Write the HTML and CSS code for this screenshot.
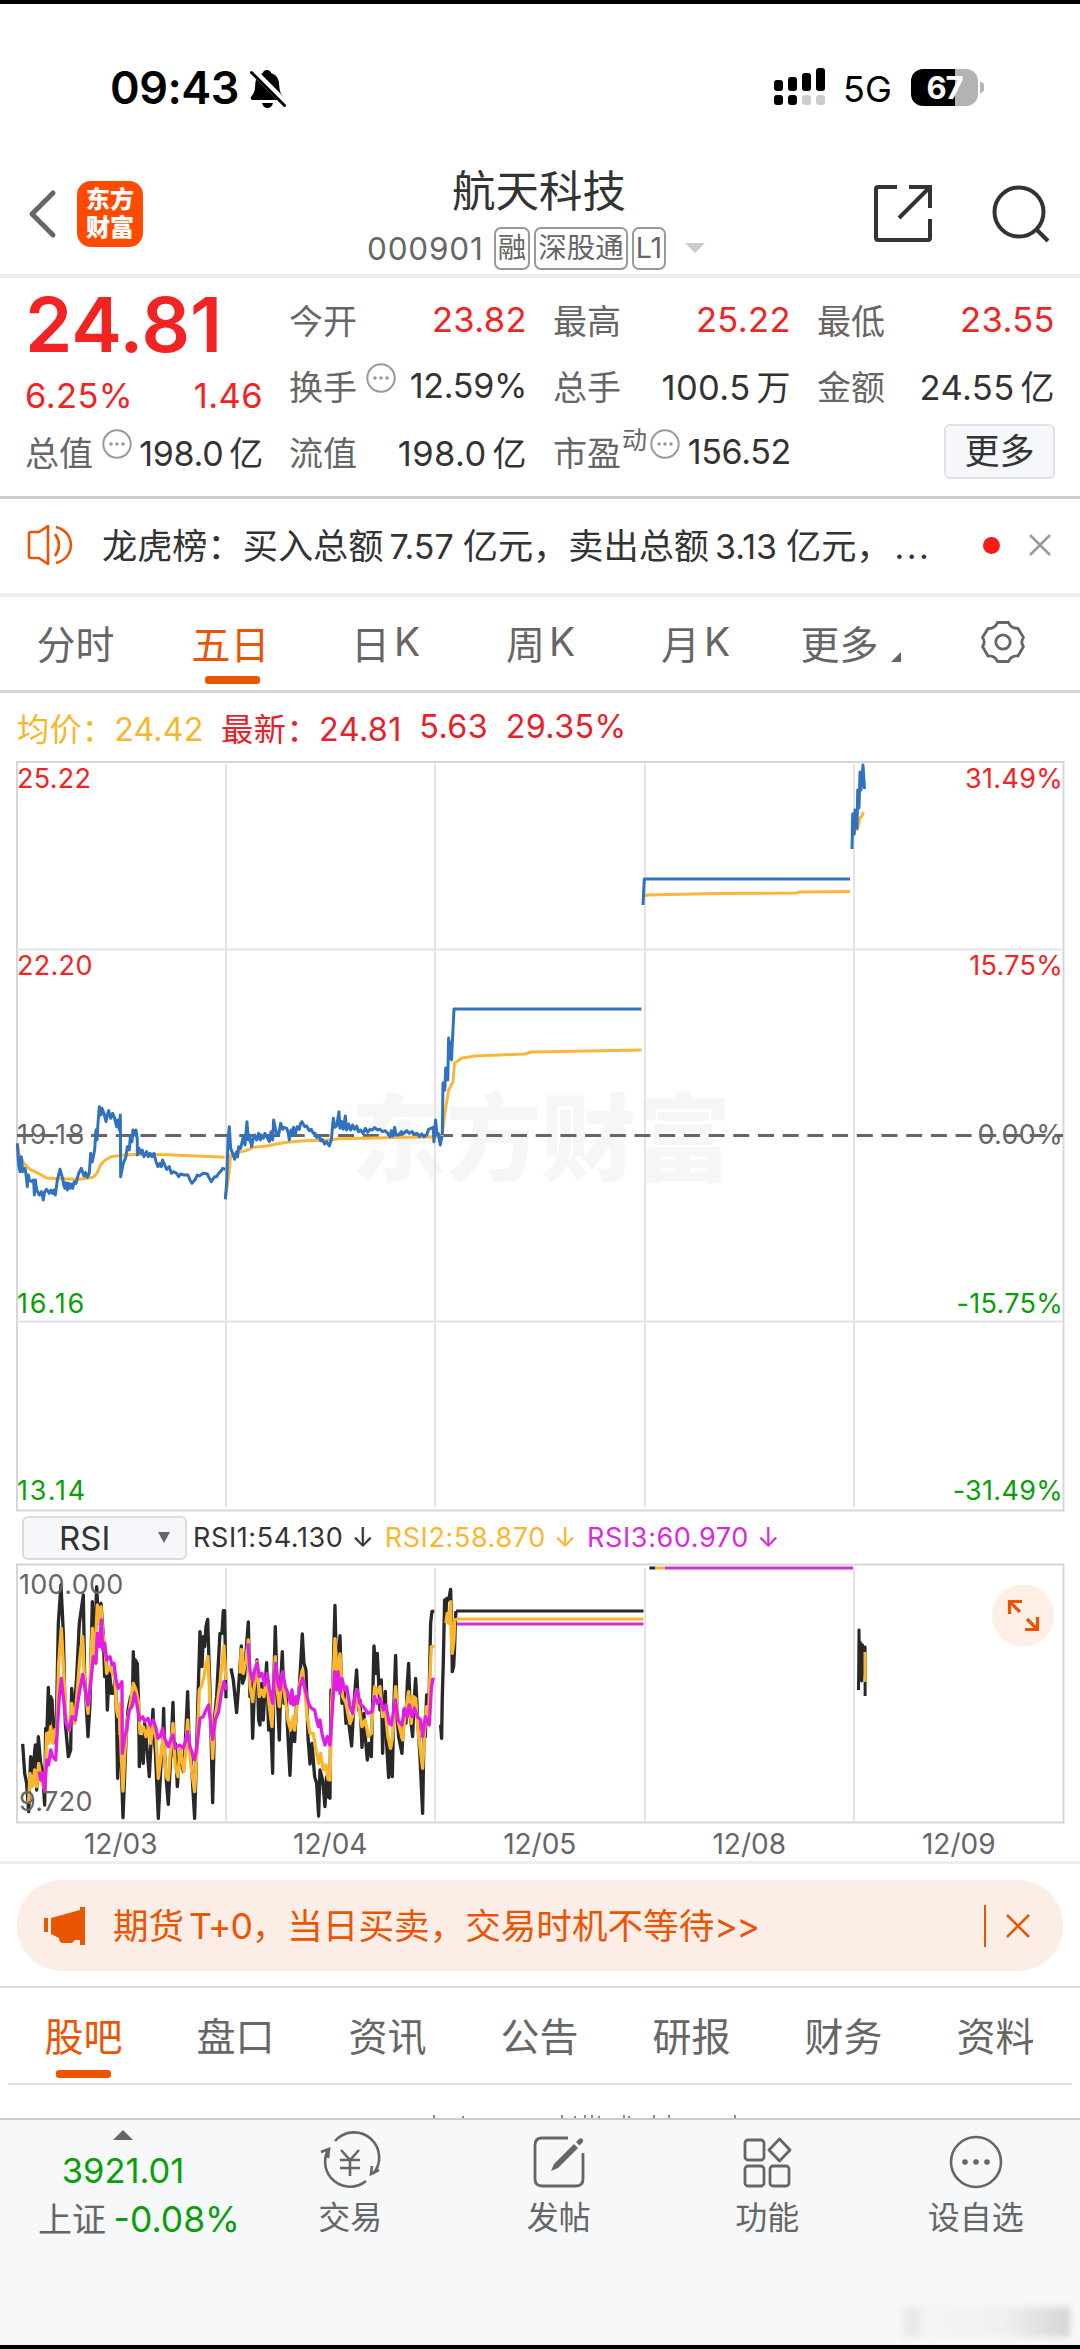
FILE: index.html
```
<!DOCTYPE html>
<html lang="zh-CN">
  <head>
    <meta charset="UTF-8">
    <title>航天科技 000901</title>
    <link rel="stylesheet" href="styles.css">
  </head>
  <body>
    <div class="status">
      <span class="time">09:43</span>
      <svg class="bell" width="36" height="38" viewBox="0 0 36 38">
        <path d="M17 0c2.400 0 4 1.500 4.300 3.200C27 5 29 9.500 29.200 15c.3 6 1.300 8 3.800 11 1.800 2.300 1.200 4-1 4H3c-2.400 0-3-2-1.300-4C4.500 22.500 5 20 5.200 15c.2-5.500 2-10 7.500-11.800C13 1.500 14.600 0 17 0zM12 33h11c-.5 3-3 5-5.500 5S12.500 36 12 33z"/>
        <path d="M1-1l36 36" stroke="#fff" stroke-width="7"/>
        <path d="M1.500 2.500l33 33" stroke="#000" stroke-width="3" stroke-linecap="round"/>
      </svg>
      <svg class="signal" width="54" height="38" viewBox="0 0 54 38">
        <g fill="#000"><rect x="1" y="12" width="9" height="11" rx="3"/><rect x="15" y="9" width="9" height="14" rx="3"/><rect x="29" y="5" width="9" height="18" rx="3"/><rect x="43" y="0" width="9" height="23" rx="3"/><rect x="1" y="27" width="9" height="10" rx="3"/><rect x="15" y="27" width="9" height="10" rx="3"/></g>
        <g fill="#ccc"><rect x="29" y="27" width="9" height="10" rx="3"/><rect x="43" y="27" width="9" height="10" rx="3"/></g>
      </svg>
      <span class="net">5G</span>
      <span class="battery">67</span><i class="cap"></i>
    </div>

    <div class="header">
      <svg class="back" width="28" height="48" viewBox="0 0 28 48"><path d="M25 3L4 24l21 21" fill="none" stroke="#666" stroke-width="5" stroke-linecap="round" stroke-linejoin="round"/></svg>
      <div class="logo">东方<br>财富</div>
      <div class="title">
        <h1>航天科技</h1>
        <div class="code">000901 <i>融</i><i>深股通</i><i>L1</i><b></b></div>
      </div>
      <svg class="share" width="60" height="60" viewBox="0 0 60 60"><path d="M24 3H5q-2 0-2 2v49q0 2 2 2h50q2 0 2-2V35M36 3h21v21M57 3L26 34" fill="none" stroke="#333" stroke-width="4"/></svg>
      <svg class="search" width="58" height="60" viewBox="0 0 58 60"><circle cx="27" cy="28" r="24.500" fill="none" stroke="#333" stroke-width="4"/><path d="M44 45l12 12" stroke="#333" stroke-width="4"/></svg>
    </div>

    <div class="quote">
      <div class="col">
        <div class="price">24.81</div>
        <div class="row red chg"><span>6.25%</span><span>1.46</span></div>
        <div class="row"><label>总值<svg class="dots"><use href="#more"/></svg></label><span class="tight">198.0<em>亿</em></span></div>
      </div>
      <div class="col">
        <div class="row"><label>今开</label><span class="red">23.82</span></div>
        <div class="row"><label>换手<svg class="dots"><use href="#more"/></svg></label><span class="tight">12.59%</span></div>
        <div class="row"><label>流值</label><span>198.0<em>亿</em></span></div>
      </div>
      <div class="col">
        <div class="row"><label>最高</label><span class="red">25.22</span></div>
        <div class="row"><label>总手</label><span>100.5<em>万</em></span></div>
        <div class="row"><label>市盈<sup>动</sup><svg class="dots"><use href="#more"/></svg></label><span class="tight">156.52</span></div>
      </div>
      <div class="col">
        <div class="row"><label>最低</label><span class="red">23.55</span></div>
        <div class="row"><label>金额</label><span>24.55<em>亿</em></span></div>
        <div class="row end"><button class="more">更多</button></div>
      </div>
    </div>

    <div class="notice">
      <svg width="48" height="40" viewBox="0 0 48 40"><path d="M2 9q0-2 2-2h8L21 1v38l-9-6H4q-2 0-2-2zM28 9q8 11 0 22M29 2q14 4 15 18-1 14-15 18" fill="none" stroke="#ea5504" stroke-width="2.600" stroke-linejoin="round"/></svg>
      <p>龙虎榜：买入总额<span>7.57</span>亿元，卖出总额<span>3.13</span>亿元，<span class="dot3">...</span></p>
      <i></i>
      <svg width="24" height="24" viewBox="0 0 24 24"><path d="M2 2l20 20M22 2L2 22" stroke="#999" stroke-width="2.500"/></svg>
    </div>

    <div class="tabs">
      <a>分时</a>
      <a class="on">五日</a>
      <a>日<s>K</s></a>
      <a>周<s>K</s></a>
      <a>月<s>K</s></a>
      <a>更多<svg width="10" height="10" class="tri"><path d="M10 0v10H0z" fill="#666"/></svg></a>
      <a><svg width="46" height="44" viewBox="0 0 46 44"><path d="M17.500 2.500h11q2 5 6.500 5.500l3 .5 5.500 9q-3.500 4.500 0 9l-5.500 9.500q-7-.5-9.500 5.500h-11Q15 35.500 8 36L2.500 26.500q3.500-4.500 0-9L8 8.500q7 .5 9.500-6z" fill="none" stroke="#666" stroke-width="2.800" stroke-linejoin="round"/><circle cx="23" cy="22" r="7.200" fill="none" stroke="#666" stroke-width="2.800"/></svg></a>
    </div>

    <div class="legend"><span class="avg">均价：24.42</span><span>最新：24.81</span><span>5.63</span><span>29.35%</span></div>

    <!-- 五日走势 -->
    <svg class="chart" width="1080" height="752" viewBox="0 760 1080 752">
      <text class="mark" x="351" y="1174">东方财富</text>
      <path class="frame" d="M17 762h1046.500v748.500H17z"/>
      <path class="grid" d="M17 949.500h1046M17 1321.500h1046M226 764v743M435 764v743M645 764v743M854 764v743"/>
      <path class="zero" d="M17 1135.500h1046"/>
      <g transform="translate(0 1040) scale(.3333)">
        <polyline class="line avg3" points="52,310 58,345 72,370 90,388 115,400 140,414 180,416 240,418 280,412 292,398 302,374 316,360 334,350 370,345 430,343 500,344 590,348 674,352"/>
        <polyline class="line avg3" points="677,470 686,410 692,345 715,337 738,332 760,322 800,318 850,308 900,303 980,300 1020,296 1120,294 1220,292 1328,290"/>
        <polyline class="line now3" points="52,310 56,375 60,395 64,350 68,395 75,385 79,410 82,440 85,405 88,420 95,425 101,420 103,465 106,420 110,450 118,465 124,455 130,480 134,455 140,448 148,460 153,450 158,460 162,450 166,465 172,420 176,405 180,388 188,415 191,435 195,445 198,428 202,450 206,430 210,445 214,432 218,445 223,425 228,430 236,400 244,385 252,408 257,398 262,412 268,400 272,340 277,365 284,330 288,270 291,300 294,250 298,200 303,225 306,205 312,220 318,245 322,225 326,212 332,235 338,220 344,235 350,260 354,240 358,270 361,225 362,410 370,370 378,350 382,320 388,330 391,290 396,305 399,270 404,285 408,270 412,300 412,345 417,325 422,340 427,330 432,350 440,335 445,350 450,340 456,350 462,340 468,365 474,380 480,370 484,380 488,360 494,375 500,388 508,380 514,400 520,395 530,400 536,410 542,402 552,405 564,405 570,420 576,430 586,418 592,405 598,408 610,400 622,402 628,415 634,425 644,410 650,410 656,400 664,392 668,385 676,388"/>
        <polyline class="line now3" points="676,478 680,430 684,300 688,260 692,325 698,340 704,358 710,335 713,350 716,320 722,325 730,290 735,315 741,245 745,300 748,285 755,320 760,295 764,285 770,300 776,280 781,300 784,285 790,295 795,280 800,290 808,305 813,275 818,300 821,240 826,265 830,280 836,285 842,250 848,268 852,262 860,265 865,280 868,300 873,270 876,285 881,262 886,282 892,260 898,268 902,250 906,245 914,260 920,258 928,272 934,268 940,280 945,280 950,292 957,288 962,302 967,298 974,312 980,305 988,318 994,300 1000,235 1004,262 1010,258 1017,215 1020,265 1026,245 1030,268 1036,228 1040,270 1046,252 1052,270 1058,255 1063,268 1070,258 1075,275 1082,270 1089,280 1096,265 1103,277 1110,268 1117,270 1124,263 1132,270 1140,268 1148,275 1156,272 1163,280 1170,290 1174,272 1179,288 1184,262 1188,285 1196,285 1204,275 1212,280 1220,272 1228,280 1236,275 1244,283 1251,280 1258,290 1265,282 1272,290 1280,285 1286,268 1300,262 1302,305 1307,240 1311,285 1315,280 1321,315 1327,285"/>
      </g>
      <polyline class="line avg" points="442,1136 445,1113 448.600,1090 453,1082 454.500,1063 462,1058 475,1056 500,1055 525,1054 531,1052 560,1051.500 641.500,1050"/>
      <polyline class="line avg" points="644,896 647,895 715,893.500 797,893 799,892 850,891.500"/>
      <polyline class="line avg" points="857,831 860,818 862,816 863.500,812"/>
      <polyline class="line now" points="442.300,1135 443,1083 444.800,1090 445.700,1068 447.800,1080 448.600,1038 449.500,1058 450.500,1042 451.500,1060 454,1009 641.500,1009"/>
      <polyline class="line now" points="643,905 644.300,879 850,879"/>
      <polyline class="line now" points="852,849 852.700,814 854.300,834 855,810 857,828 857.700,790 859,808 860,772 861,790 863,765 864.500,789"/>
      <g class="axis">
        <text class="up" x="17" y="788">25.22</text>
        <text class="up" x="17" y="975">22.20</text>
        <text class="wide" x="17" y="1144">19.18</text>
        <text class="down wide" x="17" y="1313">16.16</text>
        <text class="down wide" x="17" y="1500">13.14</text>
      </g>
      <g class="axis right">
        <text class="up" x="1063" y="788">31.49%</text>
        <text class="up" x="1063" y="975">15.75%</text>
        <text x="1063" y="1144">0.00%</text>
        <text class="down" x="1063" y="1313">-15.75%</text>
        <text class="down" x="1063" y="1500">-31.49%</text>
      </g>
    </svg>

    <div class="rsi">
      <button>RSI<i></i></button>
      <span>RSI1:54.130 ↓</span><span class="r2">RSI2:58.870 ↓</span><span class="r3">RSI3:60.970 ↓</span>
    </div>

    <!-- RSI 指标 -->
    <svg class="chart" width="1080" height="262" viewBox="0 1563 1080 262">
      <path class="frame" d="M17 1564.500h1046.500v258H17z"/>
      <path class="grid" d="M226 1568v253M435 1568v253M645 1568v253M854 1568v253"/>
      <g transform="translate(0 1490) scale(.3333)">
        <polyline class="line k3" points="68,762 74,850 80,880 86,965 92,800 98,850 106,765 110,900 115,740 122,820 128,850 134,945 137,715 141,720 145,592 148,720 152,620 156,630 162,740 168,760 175,400 183,285 190,430 196,700 205,800 212,780 215,595 222,680 230,560 238,400 250,315 254,560 264,740 270,640 277,335 281,480 284,460 290,290 296,400 303,340 310,440 314,560 318,500 322,660 328,540 334,610 340,610 346,560 350,700 353,865 357,740 362,760 369,983 378,750 384,660 392,620 397,640 400,485 404,600 406,510 412,520 416,650 418,830 424,740 430,820 434,700 438,740 448,860 454,740 459,658 462,740 466,780 475,985 484,800 488,760 491,655 494,790 498,860 505,943 512,800 519,637 523,800 526,760 532,890 540,780 550,845 556,760 563,605 568,780 573,800 584,985 592,700 596,560 600,425 606,530 610,440 614,470 618,410 623,388 630,600 638,938 644,680 650,620 655,520 660,430 666,430 670,362 674,362 678,625"/>
        <polyline class="line k3" points="693,535 700,570 710,668 718,560 724,468 728,580 734,560 738,490 745,396 750,620 754,570 758,745 764,580 771,510 776,690 780,705 785,580 790,690 795,600 800,518 806,720 812,680 818,850 822,560 826,410 832,620 838,750 843,560 847,485 852,640 858,600 862,700 870,856 876,700 884,755 890,640 896,620 900,560 907,432 912,520 918,540 924,740 930,822 936,760 944,860 950,880 956,978 960,840 968,870 975,950 980,860 984,920 990,925 993,600 997,640 1005,346 1010,560 1015,520 1020,437 1026,640 1032,600 1038,700 1044,680 1055,768 1062,640 1070,540 1076,660 1080,630 1086,772 1092,670 1096,740 1102,810 1108,760 1114,800 1118,640 1122,468 1128,550 1132,490 1140,660 1144,570 1148,790 1152,660 1156,604 1160,760 1166,862 1172,760 1177,860 1182,640 1187,496 1192,690 1196,740 1206,790 1212,660 1218,700 1222,580 1226,520 1231,680 1238,740 1242,640 1247,565 1254,700 1260,800 1268,970 1272,740 1276,740 1280,615 1284,700 1288,600 1292,400 1296,364 1303,364"/>
        <polyline class="line k3" points="1322,705 1325,745 1327,620 1330,520 1334,330 1338,370 1340,325 1346,330 1352,298 1356,440 1357,545 1361,530 1364,470 1366,400 1368,363"/>
        <polyline class="line o3" points="86,940 90,850 97,890 104,840 110,890 116,820 124,870 134,900 140,730 146,760 152,710 158,760 164,720 170,740 176,520 184,415 192,560 198,690 208,720 215,640 224,700 232,600 240,500 248,440 254,580 264,670 270,580 277,415 282,500 286,470 292,345 298,400 303,350 308,430 314,460 320,550 328,530 338,550 344,560 350,660 354,680 358,640 364,800 369,903 375,780 382,690 390,650 400,580 408,600 416,640 420,730 430,710 438,740 446,710 452,760 460,700 468,740 475,865 484,790 490,730 498,860 505,870 510,800 519,700 526,830 534,860 540,780 552,845 558,770 563,690 568,780 576,850 584,905 592,760 598,600 604,590 612,560 618,520 624,500 630,640 638,805 646,680 652,640 660,580 668,500 672,468 678,570"/>
        <polyline class="line o3" points="720,550 724,478 730,550 738,510 745,450 750,590 758,635 764,580 771,515 778,620 785,600 792,620 800,560 808,650 816,710 822,580 826,500 832,600 838,650 847,550 855,620 864,690 872,720 880,680 884,720 892,640 900,580 907,540 916,620 922,680 930,730 940,730 948,780 956,820 962,790 970,840 978,825 984,868 990,870 995,640 1000,560 1005,446 1012,560 1020,492 1028,620 1038,640 1050,700 1058,680 1070,600 1078,660 1086,710 1096,690 1105,740 1114,730 1124,590 1132,610 1140,590 1148,680 1156,660 1164,740 1172,775 1178,740 1187,590 1196,700 1208,750 1216,670 1226,605 1234,700 1240,620 1247,625 1256,740 1268,835 1274,720 1280,650 1286,680 1290,560 1294,470 1304,470"/>
        <polyline class="line o3" points="1338,400 1342,370 1346,400 1352,335 1354,440 1357,490 1362,450 1364,390 1372,388"/>
        <polyline class="line m3" points="117,845 122,870 128,850 134,905 140,810 146,825 152,780 158,800 167,810 172,720 178,620 184,565 190,620 198,700 206,720 216,680 226,690 236,620 248,553 256,600 264,645 272,580 280,500 288,520 292,430 298,470 304,390 308,480 314,460 320,510 330,500 336,525 342,520 348,570 355,595 366,575 367,790 374,740 380,720 388,660 396,650 404,610 412,650 418,690 428,680 434,695 444,685 450,705 460,690 468,715 474,745 480,740 488,715 494,745 505,770 512,750 519,735 526,775 538,765 550,775 556,755 563,725 570,770 584,810 592,760 600,685 610,680 618,660 626,645 632,700 638,748 646,690 656,665 664,610 672,575 680,600"/>
        <polyline class="line m3" points="744,460 750,540 758,575 764,540 772,520 778,560 786,550 794,585 802,550 808,595 818,640 822,570 827,520 834,580 840,600 848,545 856,590 864,610 872,640 876,600 880,645 888,620 892,640 900,590 908,565 916,600 926,640 934,655 944,660 950,690 956,710 960,690 966,730 975,765 982,740 990,765 996,680 1004,545 1010,600 1014,545 1020,610 1026,565 1034,600 1040,590 1050,650 1058,670 1066,610 1072,600 1080,640 1090,650 1104,670 1116,665 1124,620 1132,640 1140,625 1150,660 1158,645 1168,700 1174,705 1186,630 1194,690 1206,705 1214,655 1222,680 1228,645 1236,680 1244,655 1252,680 1262,690 1268,740 1276,680 1288,705 1294,600 1298,568 1304,568"/>
      </g>
      <path class="line k" d="M456 1611h187.500M649.400 1568h6M858.500 1690l.5-60 .8 45 1-32 .8 38 1-36 1 30 1.500-28v49"/>
      <path class="line o" d="M456.500 1619h187M655.400 1568h10M865 1652v30"/>
      <path class="line m" d="M457 1624h186.500M665 1568h188"/>
      <g class="axis">
        <text x="19" y="1594">100.000</text>
        <text x="19" y="1811">9.720</text>
      </g>
      <circle cx="1023" cy="1615.500" r="31" fill="#fdeee6"/>
      <path d="M1009.500 1614v-12.500h12.500M1010 1602l10 10M1037.500 1617v12.500h-12.500M1037 1629l-10-10" fill="none" stroke="#ea5504" stroke-width="3.200"/>
    </svg>
    <div class="dates"><span>12/03</span><span>12/04</span><span>12/05</span><span>12/08</span><span>12/09</span></div>

    <div class="ad">
      <svg width="42" height="38" viewBox="0 0 42 38"><path d="M0 11h4v14H0zM7 11L36 3V0h5v38h-5v-5h-5l-3 3h-9q-4 0-4-5l-8-4z" fill="#ea5504"/></svg>
      <p>期货<span> T+0</span>，当日买卖，交易时机不等待<span>&gt;&gt;</span></p>
      <i></i>
      <svg width="24" height="24" viewBox="0 0 24 24"><path d="M1 1l22 22M23 1L1 23" stroke="#ea5504" stroke-width="2.500"/></svg>
    </div>

    <div class="tabs sub">
      <a class="on">股吧</a><a>盘口</a><a>资讯</a><a>公告</a><a>研报</a><a>财务</a><a>资料</a>
    </div>
    <div class="feed">
      <svg width="1080" height="3"><path d="M434 0v3M463 1v2M562 0v3M575 1v2M585 0v3M592 0v3M599 1v2M624 0v3M629 1v2M654 0v3M669 0v3M735 0v3" stroke="#888" stroke-width="2"/></svg>
    </div>

    <div class="footer">
      <div class="index">
        <i></i>
        <b>3921.01</b>
        <p>上证 <b>-0.08%</b></p>
      </div>
      <a>
        <svg width="62" height="56" viewBox="0 0 62 56"><g fill="none" stroke="#666" stroke-width="2.600"><path d="M16 7A25 25 0 0 1 54 40M47 47A25 25 0 0 1 9 16M2 18l8-3-1 9M60 36l-8 4 1-8"/><path d="M22 16l9 10 9-10M31 26v16M21 26h20M21 34h20"/></g></svg>
        交易
      </a>
      <a>
        <svg width="56" height="56" viewBox="0 0 56 56"><path d="M37 4H11q-7 0-7 7v34q0 7 7 7h34q7 0 7-7V19" fill="none" stroke="#666" stroke-width="2.800"/><path d="M43 10l4 4-20 20-7 3 3-7zM45 8l3-3q2-1.500 3.500 0t0 3.500l-3 3z" fill="#666"/></svg>
        发帖
      </a>
      <a>
        <svg width="52" height="56" viewBox="0 0 52 56"><g fill="none" stroke="#666" stroke-width="2.800"><rect x="4" y="6" width="19" height="20" rx="3"/><rect x="4" y="32" width="19" height="20" rx="3"/><rect x="29" y="32" width="19" height="20" rx="3"/><path d="M38.500 5L49 16 38.500 27 28 16z" stroke-linejoin="round"/></g></svg>
        功能
      </a>
      <a>
        <svg width="56" height="56" viewBox="0 0 56 56"><circle cx="28" cy="28" r="25" fill="none" stroke="#666" stroke-width="2.600"/><g fill="#666"><circle cx="17" cy="28" r="2.800"/><circle cx="28" cy="28" r="2.800"/><circle cx="39" cy="28" r="2.800"/></g></svg>
        设自选
      </a>
      <div class="smudge"></div>
    </div>

    <svg width="0" height="0" class="defs">
      <symbol id="more" viewBox="0 0 30 30"><circle cx="15" cy="15" r="13.700" fill="none" stroke="#999" stroke-width="2"/><g fill="#999"><circle cx="9" cy="15" r="1.800"/><circle cx="15" cy="15" r="1.800"/><circle cx="21" cy="15" r="1.800"/></g></symbol>
    </svg>
  </body>
</html>
```
FILE: styles.css
```
* {
  box-sizing: border-box;
}
body {
  margin: 0;
  width: 1080px;
  height: 2349px;
  overflow: hidden;
  border-top: 4px solid #000;
  border-bottom: 4px solid #000;
  background: #fff;
  color: #333;
  font-family: Inter, "Noto Sans CJK SC", sans-serif;
  display: flex;
  flex-direction: column;
}
body > * {
  flex-shrink: 0;
}
svg {
  display: block;
  overflow: visible;
}
p, h1 {
  margin: 0;
  font-weight: normal;
}
i, em, s {
  font-style: normal;
  text-decoration: none;
}
.defs {
  position: absolute;
}
.red {
  color: #f22323;
}
.status {
  height: 136px;
  padding: 30px 96px 0 110px;
  display: flex;
  align-items: center;
  color: #000;
}
.time {
  font-size: 45px;
  font-weight: 600;
  letter-spacing: -0.5px;
  width: 140px;
}
.bell {
  margin-top: 4px;
}
.signal {
  margin-left: auto;
}
.net {
  font-size: 36px;
  margin: 4px 17px 0 16px;
  width: 51px;
}
.battery {
  width: 67px;
  height: 37px;
  border-radius: 12px;
  background: linear-gradient(90deg, #000 66%, #b3b3b3 66%);
  color: #fff;
  font-size: 31px;
  font-weight: 700;
  line-height: 37px;
  text-align: center;
  letter-spacing: -1px;
}
.cap {
  width: 4px;
  height: 11px;
  margin-left: 2px;
  border-radius: 0 5px 5px 0;
  background: #b3b3b3;
}
.header {
  height: 138px;
  padding: 2px 30px 0 28px;
  border-bottom: 4px solid #eee;
  display: flex;
  align-items: center;
}
.back {
  margin-top: 11px;
}
.logo {
  width: 66px;
  height: 66px;
  margin: 11px 0 0 21px;
  padding-top: 5px;
  border-radius: 14px;
  background: #ff4a00;
  color: #fff;
  font-size: 24px;
  font-weight: 900;
  line-height: 28px;
  text-align: center;
}
.title {
  flex: 1;
  padding: 15px 0 0 224px;
}
.title h1 {
  font-size: 43.5px;
  line-height: 60px;
  padding-left: 85px;
  height: 65px;
}
.code {
  display: flex;
  align-items: center;
  height: 44px;
  font-size: 31.5px;
  letter-spacing: 0.8px;
  color: #666;
  white-space: nowrap;
}
.code i {
  height: 43px;
  padding: 0 2px;
  margin-left: 4px;
  border: 2px solid #999;
  border-radius: 7px;
  font-size: 28.5px;
  line-height: 38px;
  letter-spacing: 0;
}
.code i:first-of-type {
  margin-left: 10px;
}
.code b {
  margin: 0 0 0 19px;
  border: 10px solid transparent;
  border-top-color: #ccc;
  border-bottom: 0;
}
.share {
  margin: 11px 59px 0 0;
}
.search {
  margin: 11px 0 0 0;
}
.quote {
  height: 221px;
  padding: 8px 25px 0;
  border-bottom: 3px solid #ccc;
  display: flex;
  gap: 26px;
}
.col {
  width: 238px;
}
.row {
  height: 66px;
  display: flex;
  align-items: center;
  justify-content: space-between;
  font-size: 34.5px;
  letter-spacing: 0.4px;
  white-space: nowrap;
}
.row .tight {
  font-size: 34px;
  letter-spacing: -0.3px;
}
.row label {
  color: #666;
  font-size: 34px;
  letter-spacing: 0;
  display: flex;
  align-items: center;
}
.row em {
  margin-left: 6px;
  font-size: 34px;
}
.row sup {
  font-size: 25px;
  line-height: 25px;
  margin: -22px 0 0 1px;
}
.row.end {
  justify-content: flex-end;
}
.chg {
  padding-top: 20px;
}
.dots {
  width: 30px;
  height: 30px;
  margin: -14px 0 0 9px;
}
sup + .dots {
  margin-left: 3px;
}
.price {
  height: 66px;
  line-height: 77px;
  font-size: 76px;
  font-weight: 600;
  color: #f22323;
}
.more {
  width: 111px;
  height: 55px;
  padding: 0;
  border: 2px solid #dfe1e6;
  border-radius: 6px;
  background: #f6f7fa;
  color: #333;
  font: 35px/48px Inter, "Noto Sans CJK SC", sans-serif;
}
.notice {
  height: 98px;
  padding: 0 28px 2px 27px;
  border-bottom: 4px solid #eee;
  display: flex;
  align-items: center;
}
.notice p {
  flex: 1;
  padding: 0 0 4px 27px;
  font-size: 35.2px;
  white-space: nowrap;
}
.notice p span {
  margin: 0 9px 0 6px;
  font-size: 34px;
}
.notice p .dot3 {
  margin: 0 0 0 3px;
  letter-spacing: 2.5px;
}
.notice i {
  width: 17px;
  height: 17px;
  border-radius: 50%;
  background: #ff1a1a;
  margin-right: 28px;
}
.tabs {
  height: 96px;
  border-bottom: 3px solid #d5d6d8;
  display: grid;
  grid-template-columns: repeat(6, 155px) 1fr;
  font-size: 39px;
  color: #666;
}
.tabs a {
  position: relative;
  display: flex;
  align-items: center;
  justify-content: center;
  padding: 0 4px 4px 0;
}
.tabs s {
  margin-left: 4px;
}
.tabs .on {
  color: #ea5504;
}
.tabs .on::after {
  content: "";
  position: absolute;
  left: 50%;
  bottom: 6px;
  width: 55px;
  height: 8px;
  margin-left: -28px;
  border-radius: 3px;
  background: #ea5504;
}
.tri {
  margin: 30px 0 0 12px;
}
.legend {
  height: 67px;
  padding-left: 17px;
  display: flex;
  align-items: center;
  gap: 17.5px;
  font-size: 32.3px;
  letter-spacing: 0.4px;
  color: #e62129;
}
.legend .avg {
  color: #f8b62d;
  letter-spacing: 0.1px;
}
.frame {
  fill: none;
  stroke: #d5d6da;
  stroke-width: 2;
}
.grid {
  fill: none;
  stroke: #e3e4ea;
  stroke-width: 2;
}
.zero {
  stroke: #666;
  stroke-width: 3;
  stroke-dasharray: 16 8.700;
}
.mark {
  font-size: 95px;
  font-weight: 900;
  fill: #f6f6f6;
}
.line {
  fill: none;
  stroke-width: 3;
  stroke-linejoin: round;
}
.avg3, .now3 {
  stroke-width: 9;
}
.k3, .o3, .m3 {
  stroke-width: 10;
}
.avg, .avg3 {
  stroke: #fbb639;
}
.now, .now3 {
  stroke: #3072c0;
}
.k, .k3 {
  stroke: #282828;
}
.o, .o3 {
  stroke: #fbb62d;
}
.m, .m3 {
  stroke: #e31ee3;
}
.m {
  stroke: #d231cc;
}
.axis text {
  font-size: 27px;
  letter-spacing: 0.3px;
  fill: #666;
}
.axis .wide {
  letter-spacing: 1.8px;
}
.axis .up {
  fill: #f22323;
}
.axis .down {
  fill: #0a9f0a;
}
.right {
  text-anchor: end;
}
.rsi {
  height: 51px;
  padding-left: 22px;
  display: flex;
  align-items: center;
  font-size: 27px;
  letter-spacing: 0.6px;
}
.rsi button {
  width: 165px;
  height: 44px;
  margin-right: 6px;
  padding: 0 15px 0 35px;
  border: 2px solid #d9dbdf;
  border-radius: 6px;
  background: #f6f7fa;
  color: #333;
  font: 33px Inter, sans-serif;
  display: flex;
  align-items: center;
  justify-content: space-between;
}
.rsi button i {
  border: 6px solid transparent;
  border-top: 11px solid #666;
  border-bottom: 0;
}
.rsi span {
  margin-right: 10px;
}
.r2 {
  color: #fbb62d;
}
.r3 {
  color: #d82bd8;
}
.dates {
  height: 39px;
  padding: 0 16px;
  border-bottom: 3px solid #eee;
  display: grid;
  grid-template-columns: repeat(5, 209.5px);
  text-align: center;
  font-size: 28px;
  line-height: 38px;
  color: #666;
}
.ad {
  height: 91px;
  margin: 16px 17px 15px;
  padding: 0 33px 0 27px;
  border-radius: 45px;
  background: #fceee6;
  color: #ea5504;
  display: flex;
  align-items: center;
}
.ad p {
  flex: 1;
  padding: 0 0 4px 27px;
  font-size: 35.6px;
}
.ad p span {
  letter-spacing: -1.2px;
  word-spacing: -4px;
}
.ad i {
  width: 2px;
  height: 42px;
  background: #ea5504;
  margin-right: 20px;
}
.sub {
  height: 97px;
  padding: 0 8px;
  border-top: 2px solid #ddd;
  border-bottom: 0;
  grid-template-columns: repeat(7, 152px);
}
.sub a {
  padding: 0 1px 3px 0;
}
.sub .on::after {
  bottom: 5px;
}
.feed {
  height: 35px;
  margin: 0 8px;
  border-top: 2px solid #ddd;
  padding-top: 30px;
}
.feed svg {
  margin-left: -8px;
}
.footer {
  flex: 1;
  background: #f6f8fa;
  border-top: 2px solid #ccc;
  display: grid;
  grid-template-columns: 246px repeat(4, 208.5px);
  color: #666;
  font-size: 32px;
  position: relative;
}
.footer a {
  display: flex;
  flex-direction: column;
  align-items: center;
  padding-top: 14px;
  line-height: 56px;
}
.index {
  padding-top: 10px;
  display: flex;
  flex-direction: column;
  align-items: center;
  font-size: 34px;
  line-height: 49px;
}
.index i {
  border: 10px solid transparent;
  border-bottom-color: #666;
  border-top: 0;
}
.index b {
  font-weight: normal;
  font-size: 34.5px;
  color: #0a9f0a;
  margin-top: 6px;
}
.index p {
  padding-left: 32px;
  white-space: nowrap;
  word-spacing: -2px;
}
.index p b {
  font-size: 35.5px;
}
.smudge {
  position: absolute;
  right: 10px;
  bottom: 8px;
  width: 168px;
  height: 30px;
  background: linear-gradient(90deg, #eceef0 0, #e4e6e8 12px, #f3f5f7 24px, #eef0f2 60%, #d3d5d7);
  filter: blur(3px);
}
```
